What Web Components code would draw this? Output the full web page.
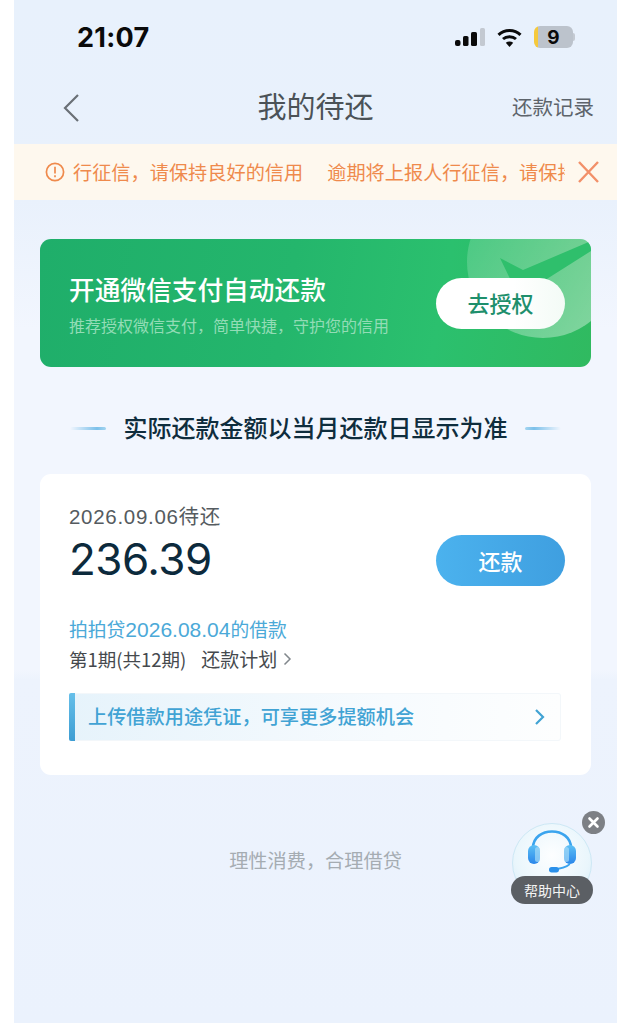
<!DOCTYPE html>
<html lang="zh">
<head>
<meta charset="utf-8">
<title>我的待还</title>
<style>
  html, body { margin: 0; padding: 0; background: #fff; }
  body { font-family: "Noto Sans CJK SC", "Liberation Sans", sans-serif; }
</style>
</head>
<body>
<phone-page>
  <status-bar></status-bar>
  <nav-bar title="我的待还" action="还款记录"></nav-bar>
  <notice-bar><span>行征信，请保持良好的信用</span><span>逾期将上报人行征信，请保持良好的信用</span></notice-bar>
  <auth-banner title="开通微信支付自动还款" sub="推荐授权微信支付，简单快捷，守护您的信用" btn="去授权"></auth-banner>
  <section-title>实际还款金额以当月还款日显示为准</section-title>
  <repay-card date="2026.09.06待还" amount="236.39" loan="拍拍贷2026.08.04的借款" term="第1期(共12期)" plan="还款计划" tip="上传借款用途凭证，可享更多提额机会"></repay-card>
  <page-foot>理性消费，合理借贷</page-foot>
  <help-float></help-float>
</phone-page>

<script>
const FONT = `"Noto Sans CJK SC", "Liberation Sans", sans-serif`;
const LATIN = `"Liberation Sans", "Noto Sans CJK SC", sans-serif`;

class PhonePage extends HTMLElement {
  constructor() {
    super();
    this.attachShadow({ mode: "open" });
    this.shadowRoot.innerHTML = `
      <style>
        :host {
          display: block;
          position: relative;
          box-sizing: border-box;
          width: 603px;
          height: 1023px;
          margin-left: 14px;
          overflow: hidden;
          font-family: ${FONT};
          background: linear-gradient(180deg, #e8f1fc 0, #e9f1fc 200px, #f2f6fe 330px, #f2f6fe 670px, #edf3fd 680px, #ebf2fd 1023px);
        }
      </style>
      <slot></slot>
    `;
  }
}

class StatusBar extends HTMLElement {
  constructor() {
    super();
    this.attachShadow({ mode: "open" });
    this.shadowRoot.innerHTML = `
      <style>
        :host {
          display: flex;
          align-items: center;
          justify-content: space-between;
          box-sizing: border-box;
          height: 72px;
          padding: 2px 42px 0 63px;
        }
        .time {
          font: 700 27px/1 "Inter", "Liberation Sans", sans-serif;
          color: #0a0a0a;
          letter-spacing: 0.3px;
        }
        .icons { display: flex; align-items: center; gap: 12px; }
        svg { display: block; }
        .batt {
          display: flex;
          align-items: center;
          justify-content: center;
          width: 39px;
          height: 22px;
          border-radius: 6px;
          overflow: hidden;
          background: linear-gradient(90deg, #f5c93c 0 4px, #bcc3cc 4px);
          font: 700 19px/1 "Inter", "Liberation Sans", sans-serif;
          color: #0a0a0a;
        }
        .cap { width: 2px; height: 8px; margin-left: -12px; border-radius: 0 2px 2px 0; background: #c4cad2; }
      </style>
      <span class="time">21:07</span>
      <div class="icons">
        <svg width="30" height="18" viewBox="0 0 30 18">
          <rect x="0" y="12" width="5.500" height="6" rx="2" fill="#0a0a0a"/>
          <rect x="8" y="8" width="5.500" height="10" rx="1.600" fill="#0a0a0a"/>
          <rect x="16" y="4" width="6" height="14" rx="1.600" fill="#0a0a0a"/>
          <rect x="25" y="0" width="5" height="18" rx="1.600" fill="#c3c9d1"/>
        </svg>
        <svg width="25" height="19" viewBox="0 0 25 19" fill="none" stroke="#0a0a0a" stroke-width="3">
          <path d="M1.500 6.800 C7.500 1 17.500 1 23.500 6.800"/>
          <path d="M6 11 C9.500 7.900 15.500 7.900 19 11"/>
          <path d="M12.500 19 L8.800 14.800 C11 13.200 14 13.200 16.200 14.800 Z" fill="#0a0a0a" stroke="none"/>
        </svg>
        <span class="batt">9</span>
        <span class="cap"></span>
      </div>
    `;
  }
}

class NavBar extends HTMLElement {
  constructor() {
    super();
    this.attachShadow({ mode: "open" });
  }
  connectedCallback() {
    this.shadowRoot.innerHTML = `
      <style>
        :host {
          display: grid;
          grid-template-columns: 1fr auto 1fr;
          align-items: center;
          box-sizing: border-box;
          height: 72px;
          padding: 0 23px;
        }
        svg { display: block; margin-left: 25px; }
        h1 { margin: 0; padding-bottom: 6px; font-size: 29px; line-height: 1; font-weight: 400; color: #4b5257; }
        a { justify-self: end; padding-bottom: 4px; font-size: 20.5px; line-height: 1; color: #5d646b; }
      </style>
      <svg width="20" height="30" viewBox="0 0 20 30" fill="none" stroke="#6a7076" stroke-width="2.2">
        <path d="M16 2 L3 15 L16 28"/>
      </svg>
      <h1>${this.getAttribute("title")}</h1>
      <a>${this.getAttribute("action")}</a>
    `;
  }
}

class NoticeBar extends HTMLElement {
  constructor() {
    super();
    this.attachShadow({ mode: "open" });
    this.shadowRoot.innerHTML = `
      <style>
        :host {
          display: flex;
          align-items: center;
          box-sizing: border-box;
          height: 56px;
          padding: 0 18px 0 31px;
          background: #fef8ee;
          color: #ef8a4c;
        }
        .txt {
          display: flex;
          gap: 24px;
          flex: 1;
          min-width: 0;
          margin: 0 13px 0 8px;
          overflow: hidden;
          white-space: nowrap;
          font-size: 19.2px;
          line-height: 1.4;
        }
        svg { flex: none; display: block; }
      </style>
      <svg width="20" height="20" viewBox="0 0 20 20" fill="none" stroke="#ef8a4c" stroke-width="1.700">
        <circle cx="10" cy="10" r="8.600"/>
        <path d="M10 4.800 V11.500 M10 13.300 V15.200"/>
      </svg>
      <div class="txt"><slot></slot></div>
      <svg width="21" height="22" viewBox="0 0 21 22" fill="none" stroke="#f29069" stroke-width="2.400">
        <path d="M1 1 L20 21 M20 1 L1 21"/>
      </svg>
    `;
  }
}

class AuthBanner extends HTMLElement {
  constructor() {
    super();
    this.attachShadow({ mode: "open" });
  }
  connectedCallback() {
    this.shadowRoot.innerHTML = `
      <style>
        :host {
          display: flex;
          align-items: center;
          justify-content: space-between;
          position: relative;
          overflow: hidden;
          box-sizing: border-box;
          height: 128px;
          margin: 39px 26px 0;
          padding: 0 26px 0 29px;
          border-radius: 11px;
          background: linear-gradient(100deg, #1fae6a 0%, #24b66c 45%, #2bc06e 72%, #30ba60 100%);
        }
        .deco { position: absolute; right: 0; top: 0; }
        .copy { position: relative; }
        h2 { margin: 0; font-size: 25.7px; line-height: 36px; font-weight: 500; color: #fff; white-space: nowrap; }
        p { margin: 7px 0 0; font-size: 16px; line-height: 22px; color: #93dcb6; white-space: nowrap; }
        button {
          position: relative;
          width: 129px;
          height: 51px;
          border: 0;
          padding: 0 0 2px;
          border-radius: 26px;
          background: linear-gradient(90deg, #fff 60%, #f3fbf6);
          color: #1e8f6c;
          font: 500 22px/1 ${FONT};
        }
      </style>
      <svg class="deco" width="130" height="128" viewBox="0 0 130 128">
        <defs>
          <linearGradient id="c" x1="0" y1="0" x2="1" y2="0.600">
            <stop offset="0" stop-color="#fff" stop-opacity=".12"/>
            <stop offset="1" stop-color="#fff" stop-opacity=".38"/>
          </linearGradient>
        </defs>
        <circle cx="82" cy="23" r="76" fill="url(#c)"/>
        <path d="M39 19 L62 31 L130 2 L130 12 L70 50 L54 50 Z" fill="#2fbf6c"/>
      </svg>
      <div class="copy">
        <h2>${this.getAttribute("title")}</h2>
        <p>${this.getAttribute("sub")}</p>
      </div>
      <button>${this.getAttribute("btn")}</button>
    `;
  }
}

class SectionTitle extends HTMLElement {
  constructor() {
    super();
    this.attachShadow({ mode: "open" });
    this.shadowRoot.innerHTML = `
      <style>
        :host {
          display: flex;
          align-items: center;
          justify-content: center;
          gap: 17.5px;
          height: 40px;
          margin-top: 41px;
          font-size: 24px;
          font-weight: 500;
          color: #0f2d3d;
          white-space: nowrap;
        }
        span { padding-bottom: 4px; }
        i { width: 36px; height: 3px; border-radius: 2px; }
        .l { background: linear-gradient(90deg, rgba(124,192,234,0), #7cc0ea 75%, #a5d5f0); }
        .r { background: linear-gradient(90deg, #a5d5f0, #7cc0ea 25%, rgba(124,192,234,0)); }
      </style>
      <i class="l"></i><span><slot></slot></span><i class="r"></i>
    `;
  }
}

class RepayCard extends HTMLElement {
  constructor() {
    super();
    this.attachShadow({ mode: "open" });
  }
  connectedCallback() {
    const a = (n) => this.getAttribute(n);
    const loan = a("loan").replace(/[\d.]+/, (m) => `<b>${m}</b>`);
    this.shadowRoot.innerHTML = `
      <style>
        :host {
          display: block;
          box-sizing: border-box;
          height: 301px;
          margin: 26px 26px 0;
          padding: 29px 26px 0 29px;
          background: #fff;
          border-radius: 11px;
        }
        .top { display: flex; align-items: flex-end; justify-content: space-between; }
        .date { font: 400 20.5px/28px ${LATIN}; letter-spacing: .7px; color: #555b60; }
        .amount { margin-top: 3px; font: 400 44px/50px "Inter", "Liberation Sans", sans-serif; color: #0c2a3c; letter-spacing: -.5px; }
        button {
          width: 129px;
          height: 51px;
          margin-bottom: -2px;
          border: 0;
          padding: 0 0 2px;
          border-radius: 26px;
          background: linear-gradient(90deg, #4bb2ee, #3f9fe0);
          color: #fff;
          font: 500 22px/1 ${FONT};
        }
        .loan { margin-top: 30px; font-size: 18.8px; line-height: 30px; color: #4ba9d8; }
        .loan b { font: 400 21px/30px "Liberation Sans", sans-serif; }
        .term { display: flex; align-items: center; height: 28px; font-size: 18.5px; line-height: 28px; color: #45494d; white-space: nowrap; }
        .plan { margin-left: 15px; font-size: 19px; }
        .term svg { margin-left: 6px; }
        .tip {
          display: flex;
          align-items: center;
          box-sizing: border-box;
          height: 48px;
          margin: 20px 4px 0 0;
          padding-right: 14px;
          border: 1px solid #f3f7fa;
          border-left: 0;
          border-radius: 3px;
          background: linear-gradient(90deg, #e6f3fb, #f7fbfe 65%, #fdfefe);
          font-size: 19.2px;
          font-weight: 500;
          color: #41a3d4;
        }
        .bar { align-self: stretch; width: 6px; margin: -1px 0; border-radius: 2px 0 0 2px; background: linear-gradient(180deg, #66bfe9, #3d9dd3); }
        .label { flex: 1; margin-left: 13px; padding-bottom: 3px; }
      </style>
      <div class="top">
        <div>
          <div class="date">${a("date")}</div>
          <div class="amount">${a("amount")}</div>
        </div>
        <button>还款</button>
      </div>
      <div class="loan">${loan}</div>
      <div class="term">
        <span>${a("term")}</span><span class="plan">${a("plan")}</span>
        <svg width="9" height="14" viewBox="0 0 9 14" fill="none" stroke="#81878c" stroke-width="1.500"><path d="M1.500 1.500 L7 7 L1.500 12.500"/></svg>
      </div>
      <div class="tip">
        <i class="bar"></i>
        <span class="label">${a("tip")}</span>
        <svg width="12" height="18" viewBox="0 0 12 18" fill="none" stroke="#41a3d4" stroke-width="2.200"><path d="M2 2 L9 9 L2 16"/></svg>
      </div>
    `;
  }
}

class PageFoot extends HTMLElement {
  constructor() {
    super();
    this.attachShadow({ mode: "open" });
    this.shadowRoot.innerHTML = `
      <style>
        :host {
          display: block;
          margin-top: 69px;
          text-align: center;
          font-size: 19.2px;
          line-height: 32px;
          color: #a5acb2;
        }
      </style>
      <slot></slot>
    `;
  }
}

// floats over the page, bottom right
class HelpFloat extends HTMLElement {
  constructor() {
    super();
    this.attachShadow({ mode: "open" });
    this.shadowRoot.innerHTML = `
      <style>
        :host {
          display: block;
          position: absolute;
          left: 497px;
          top: 809px;
          width: 94px;
          height: 96px;
        }
        .ball {
          position: absolute;
          left: 1px;
          top: 14px;
          width: 80px;
          height: 80px;
          box-sizing: border-box;
          border-radius: 50%;
          border: 1px solid #cde8f5;
          background: radial-gradient(circle at 50% 40%, #fdfeff 0, #eaf6fc 60%, #d0e9f7 100%);
        }
        .ball svg { position: absolute; left: 15px; top: 6px; }
        .close {
          position: absolute;
          left: 71px;
          top: 2px;
          width: 23px;
          height: 23px;
          border-radius: 50%;
          background: #7d8085;
        }
        .close svg { display: block; }
        .label {
          position: absolute;
          left: 0;
          bottom: 1px;
          width: 82px;
          height: 28px;
          border-radius: 14px;
          background: #5b5f64;
          color: #f4f4f4;
          font-size: 14px;
          line-height: 28px;
          text-align: center;
        }
      </style>
      <div class="ball">
        <svg width="48" height="43" viewBox="0 0 48 43" fill="none">
          <defs>
            <linearGradient id="g" x1="0" y1="0" x2="0" y2="1">
              <stop offset="0" stop-color="#5cc0f5"/>
              <stop offset="1" stop-color="#2a86ea"/>
            </linearGradient>
          </defs>
          <path d="M5 18 C5 -4 43 -4 43 18" stroke="#3ba4ee" stroke-width="2.600"/>
          <rect x="0" y="15" width="12" height="19" rx="6" fill="url(#g)"/>
          <rect x="36" y="15" width="12" height="19" rx="6" fill="url(#g)"/>
          <rect x="7" y="17" width="5" height="15" rx="2.500" fill="#a6dcf8" opacity=".7"/>
          <rect x="36" y="17" width="5" height="15" rx="2.500" fill="#a6dcf8" opacity=".7"/>
          <path d="M42 33 C41 37 34 38 29 39" stroke="#3ba4ee" stroke-width="1.800"/>
          <rect x="21" y="37" width="10" height="5.500" rx="2.700" fill="#2a90ea"/>
        </svg>
      </div>
      <div class="close">
        <svg width="23" height="23" viewBox="0 0 23 23" fill="none" stroke="#fff" stroke-width="2.600" stroke-linecap="round"><path d="M7.500 7.500 L15.500 15.500 M15.500 7.500 L7.500 15.500"/></svg>
      </div>
      <div class="label">帮助中心</div>
    `;
  }
}

customElements.define("phone-page", PhonePage);
customElements.define("status-bar", StatusBar);
customElements.define("nav-bar", NavBar);
customElements.define("notice-bar", NoticeBar);
customElements.define("auth-banner", AuthBanner);
customElements.define("section-title", SectionTitle);
customElements.define("repay-card", RepayCard);
customElements.define("page-foot", PageFoot);
customElements.define("help-float", HelpFloat);
</script>
</body>
</html>
